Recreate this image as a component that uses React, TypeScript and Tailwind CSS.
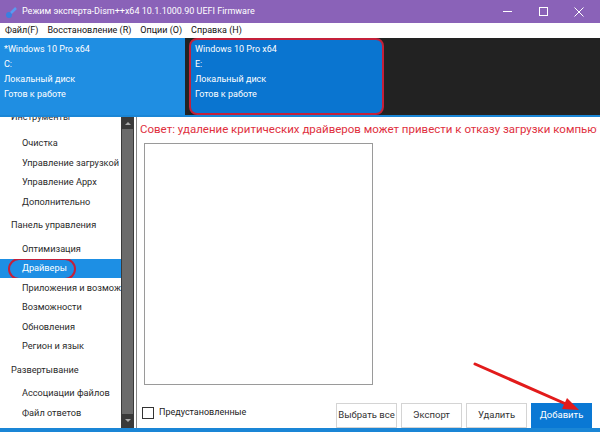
import React from "react";

const font = { fontFamily: 'Roboto, "Noto Sans", sans-serif' };

const NavItem = ({ label, sub, active }: { label: string; sub?: boolean; active?: boolean }) => (
  <div
    className={`relative h-[19.5px] shrink-0 flex items-center whitespace-nowrap overflow-hidden ${sub ? "pl-[22px]" : "pl-[11px]"} ${
      active ? "bg-[#1d8fe4] text-white" : "text-[#2a2a2a]"
    }`}
  >
    {label}
    {active && (
      <span className="absolute left-[8px] top-[-1px] w-[68px] h-[22px] rounded-full border-2 border-[#c4203a]" />
    )}
  </div>
);

const Gap = ({ h }: { h: string }) => <div className={`${h} shrink-0`} />;

const Btn = ({ label, primary }: { label: string; primary?: boolean }) => (
  <div
    className={`w-[61px] h-[25px] flex items-center justify-center whitespace-nowrap text-[9.5px] ${
      primary ? "bg-[#0a78d4] text-white" : "bg-white border border-[#d4d4d4] text-[#333]"
    }`}
  >
    {label}
  </div>
);

export default function App() {
  return (
    <div className="w-[600px] h-[432px] flex flex-col overflow-hidden bg-white" style={font}>
      {/* title */}
      <div className="h-[23px] bg-[#8a62b8] flex items-center text-white">
        <svg width="14" height="14" viewBox="0 0 14 14" className="ml-[5px] mr-[3px]">
          <circle cx="4" cy="10" r="3" fill="#3a7fe0" />
          <path d="M6 8 L11 3" stroke="#5a9af0" strokeWidth="2.5" />
        </svg>
        <span className="flex-1 text-[9px] whitespace-nowrap">Режим эксперта-Dism++x64 10.1.1000.90 UEFI Firmware</span>
        <span className="w-[36px] flex justify-center">
          <span className="w-[9px] h-px bg-white" />
        </span>
        <span className="w-[36px] flex justify-center">
          <span className="w-[9px] h-[9px] border border-white" />
        </span>
        <span className="w-[36px] flex justify-center mr-[3px]">
          <svg width="10" height="10" viewBox="0 0 10 10">
            <path d="M0.5 0.5 L9.5 9.5 M9.5 0.5 L0.5 9.5" stroke="white" strokeWidth="1" />
          </svg>
        </span>
      </div>

      {/* menu */}
      <div className="h-[15px] flex items-center gap-[9px] pl-[5px] text-[9px] text-[#111] leading-none">
        <span>Файл(F)</span>
        <span>Восстановление (R)</span>
        <span>Опции (O)</span>
        <span>Справка (H)</span>
      </div>

      {/* drives */}
      <div className="h-[79px] bg-[#222222] flex gap-[4px] border-b-2 border-[#1a86d6]">
        <div className="w-[185px] bg-[#1f8ee2] text-white text-[9px] leading-[15px] pl-[4px] pt-[4px]">
          <div>*Windows 10 Pro x64</div>
          <div>C:</div>
          <div>Локальный диск</div>
          <div>Готов к работе</div>
        </div>
        <div className="w-[195px] bg-[#0a75d0] text-white text-[9px] leading-[15px] pl-[4px] pt-[2px] rounded-[8px] border-2 border-[#c4203a]">
          <div>Windows 10 Pro x64</div>
          <div>E:</div>
          <div>Локальный диск</div>
          <div>Готов к работе</div>
        </div>
      </div>

      {/* body */}
      <div className="flex flex-1 min-h-0">
        <div className="w-[137px] shrink-0 flex border-r border-[#888] text-[9.2px]">
          <div className="flex-1 min-w-0 flex flex-col overflow-hidden">
            <div className="-mt-[10px] flex flex-col">
              <NavItem label="Инструменты" />
              <Gap h="h-[7px]" />
              <NavItem label="Очистка" sub />
              <NavItem label="Управление загрузкой" sub />
              <NavItem label="Управление Appx" sub />
              <NavItem label="Дополнительно" sub />
              <Gap h="h-[4px]" />
              <NavItem label="Панель управления" />
              <Gap h="h-[4px]" />
              <NavItem label="Оптимизация" sub />
              <NavItem label="Драйверы" sub active />
              <NavItem label="Приложения и возможности" sub />
              <NavItem label="Возможности" sub />
              <NavItem label="Обновления" sub />
              <NavItem label="Регион и язык" sub />
              <Gap h="h-[4px]" />
              <NavItem label="Развертывание" />
              <Gap h="h-[4px]" />
              <NavItem label="Ассоциации файлов" sub />
              <NavItem label="Файл ответов" sub />
            </div>
          </div>
          <div className="w-[13px] mr-[2px] bg-[#3a3a3a] flex flex-col items-center">
            <svg width="8" height="12" viewBox="0 0 8 12">
              <path d="M1 8 L4 5 L7 8 Z" fill="#aaa" />
            </svg>
            <div className="w-[11px] flex-1 bg-[#6b6b6b]" />
            <svg width="8" height="14" viewBox="0 0 8 14">
              <path d="M1 5 L4 8 L7 5 Z" fill="#aaa" />
            </svg>
          </div>
        </div>

        <div className="flex-1 min-w-0 relative flex flex-col pl-[3px] pr-[8px]">
          <div className="h-[26px] -mr-[5px] flex items-center text-[11.5px] text-[#e0303e] whitespace-nowrap overflow-hidden">
            Совет: удаление критических драйверов может привести к отказу загрузки компьютера
          </div>
          <div className="ml-[4px] w-[229px] h-[242px] border border-[#9a9a9a]" />
          <div className="flex items-center mt-[12px]">
            <span className="w-[12px] h-[12px] border border-[#333] ml-[2px] mr-[5px]" />
            <span className="text-[9px] text-[#222] flex-1">Предустановленные</span>
            <div className="flex gap-[4px] mt-[6px]">
              <Btn label="Выбрать все" />
              <Btn label="Экспорт" />
              <Btn label="Удалить" />
              <Btn label="Добавить" primary />
            </div>
          </div>
          <svg className="absolute left-[334px] top-[243px]" width="112" height="54" viewBox="0 0 112 54">
            <path d="M4 4 L95 44" stroke="#e21b1b" strokeWidth="3" strokeLinecap="round" />
            <path d="M108 50 L91 49 L96 38 Z" fill="#e21b1b" />
          </svg>
        </div>
      </div>
      <div className="h-[4px] bg-[#1a86d6]" />
    </div>
  );
}
